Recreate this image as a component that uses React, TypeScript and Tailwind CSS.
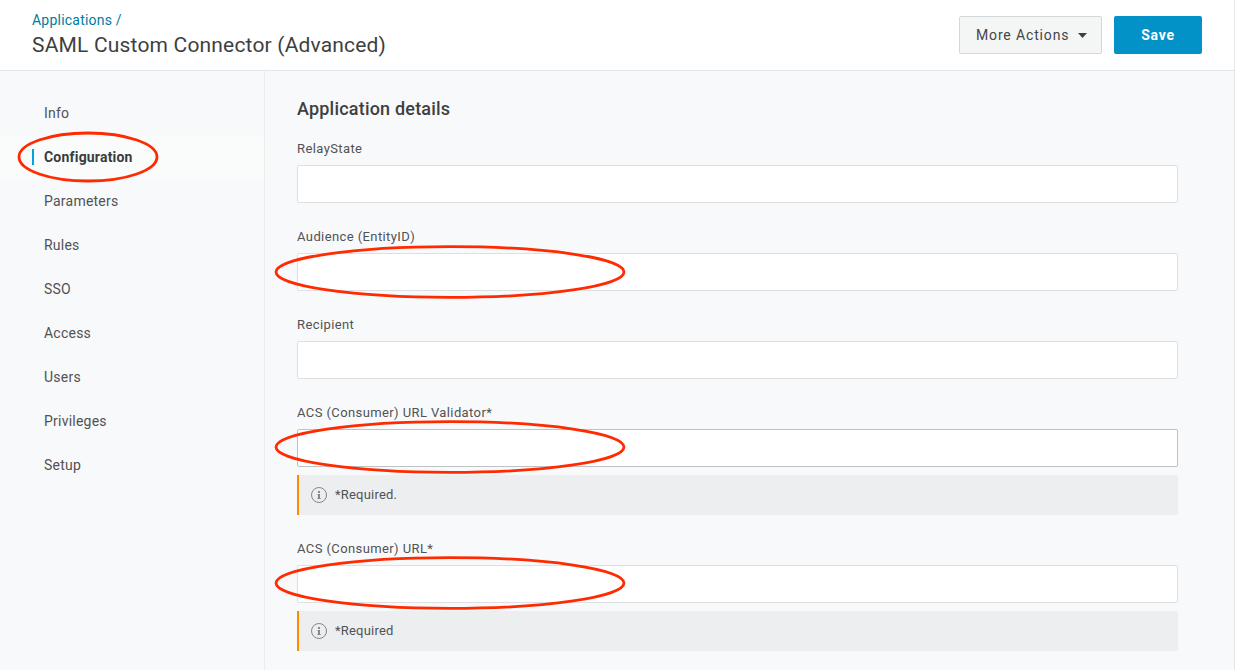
type NavItem = { label: string; active?: boolean };
type FieldProps = { label: string; hint?: string; focused?: boolean; marked?: "lower" | "upper" };

const navItems: NavItem[] = [
  { label: "Info" },
  { label: "Configuration", active: true },
  { label: "Parameters" },
  { label: "Rules" },
  { label: "SSO" },
  { label: "Access" },
  { label: "Users" },
  { label: "Privileges" },
  { label: "Setup" },
];

const fields: FieldProps[] = [
  { label: "RelayState" },
  { label: "Audience (EntityID)", marked: "lower" },
  { label: "Recipient" },
  { label: "ACS (Consumer) URL Validator*", hint: "*Required.", focused: true, marked: "upper" },
  { label: "ACS (Consumer) URL*", hint: "*Required", marked: "upper" },
];

function Header() {
  return (
    <header className="flex h-[71px] shrink-0 items-start justify-between border-b border-[#e4e6e8] bg-white pr-8 pl-8">
      <div className="pt-[10px]">
        <a href="#" className="block text-sm leading-5 tracking-[0.22px] text-[#007c9e]">
          Applications /
        </a>
        <h1 className="pt-px text-[21px] leading-[29px] tracking-[0.18px] text-[#3e3f40]">
          SAML Custom Connector (Advanced)
        </h1>
      </div>
      <div className="flex gap-3 pt-4">
        <button className="flex h-[38px] w-[143px] items-center rounded-xs border border-[#d4d7d8] bg-[#f4f6f6] pl-4 text-sm tracking-[0.85px] text-[#444546]">
          More Actions
          <svg className="ml-[9px]" width="9" height="5" viewBox="0 0 9 5">
            <path d="M0 0h9L4.5 5z" fill="#3e3f40" />
          </svg>
        </button>
        <button className="h-[38px] w-[88px] rounded-xs bg-[#0392c7] text-sm font-bold tracking-[0.75px] text-white">
          Save
        </button>
      </div>
    </header>
  );
}

function Sidebar() {
  return (
    <nav className="w-[265px] shrink-0 border-r border-[#eaecee] pt-5">
      {navItems.map((item) => (
        <a
          key={item.label}
          href="#"
          className={
            item.active
              ? "relative flex h-11 items-center bg-[#fafcfb] pl-8 text-sm font-bold tracking-[0.2px] text-[#3a3b3c]"
              : "flex h-11 items-center pl-11 text-sm tracking-[0.23px] text-[#515253]"
          }
        >
          {item.active && <span className="mr-[10px] h-4 w-[2px] bg-[#00a3dd]" />}
          {item.label}
          {item.active && (
            <svg className="absolute top-[-4px] left-[17px]" width="142" height="52" viewBox="0 0 142 52" fill="none">
              <ellipse cx="71" cy="26" rx="69" ry="24" stroke="#ff2a00" strokeWidth="2.8" />
            </svg>
          )}
        </a>
      ))}
    </nav>
  );
}

function Hint({ text }: { text: string }) {
  return (
    <div className="mt-2 flex h-10 items-center rounded-r-xs border-l-2 border-[#ff8a00] bg-[#edeef0] pl-3 text-[13px] tracking-[0.2px] text-[#515253]">
      <svg className="mr-2" width="16" height="16" viewBox="0 0 16 16" fill="none">
        <circle cx="8" cy="8" r="7.5" stroke="#858789" />
        <path d="M7 4h2v2H7zM6.5 7H9v4h.7v1H6.3v-1H7V8h-.5z" fill="#858789" />
      </svg>
      {text}
    </div>
  );
}

function Field({ label, hint, focused, marked }: FieldProps) {
  return (
    <div>
      <label className="block h-[26px] pt-px text-[13px] leading-[18px] tracking-[0.4px] text-[#515253]">{label}</label>
      <div className="relative">
        <input
          aria-label={label}
          className={
            focused
              ? "block h-[38px] w-full rounded-xs border border-[#bfc2c5] bg-white px-3 outline-none"
              : "block h-[38px] w-full rounded-xs border border-[#dddfe0] bg-white px-3 outline-none"
          }
        />
        {marked && (
          <svg
            className={marked === "lower" ? "absolute top-[-8px] left-[-23px] z-10" : "absolute top-[-9px] left-[-23px] z-10"}
            width="352"
            height="54"
            viewBox="0 0 352 54"
            fill="none"
          >
            <ellipse cx="176" cy="27" rx="174" ry="25.4" stroke="#ff2a00" strokeWidth="2.8" />
          </svg>
        )}
      </div>
      {hint && <Hint text={hint} />}
    </div>
  );
}

export default function App() {
  return (
    <div className="flex h-[670px] w-[1235px] flex-col overflow-hidden border-r border-[#e4e6e8] bg-[#f8f9fb] font-['Roboto',sans-serif]">
      <Header />
      <div className="flex min-h-0 flex-1">
        <Sidebar />
        <main className="flex-1 pr-14 pl-8 pt-[26px]">
          <h2 className="mb-[18px] text-lg leading-6 font-medium tracking-[0.2px] text-[#3e3f40]">Application details</h2>
          <form className="flex flex-col gap-6">
            {fields.map((field) => (
              <Field key={field.label} {...field} />
            ))}
          </form>
        </main>
      </div>
    </div>
  );
}
